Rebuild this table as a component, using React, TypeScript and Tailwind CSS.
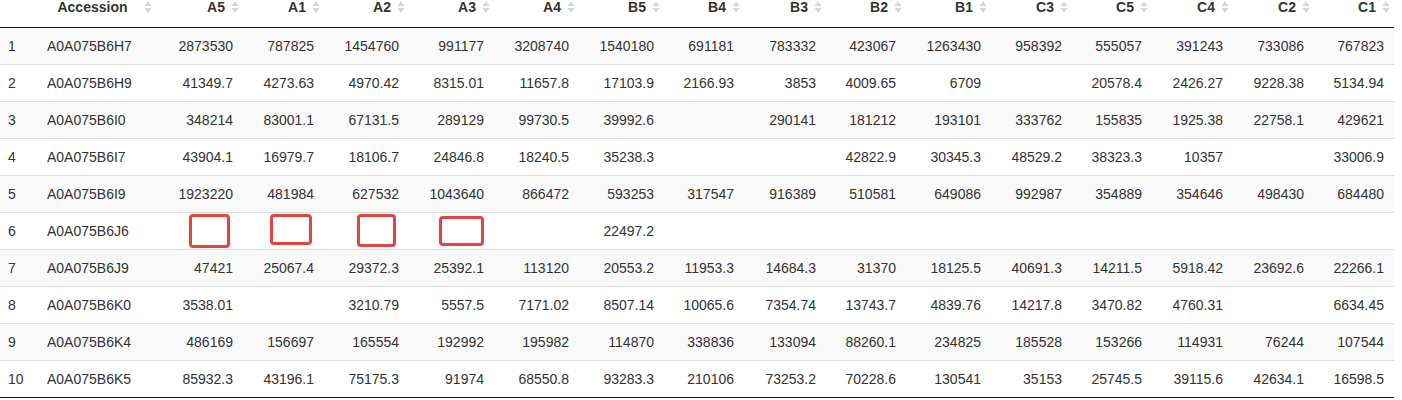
import React from "react";

const cols = ["A5", "A1", "A2", "A3", "A4", "B5", "B4", "B3", "B2", "B1", "C3", "C5", "C4", "C2", "C1"];
const widths = [37, 119, 87, 81, 85, 85, 85, 85, 80, 82, 80, 85, 81, 80, 81, 81, 80];

const rows: [string, string[]][] = [
  ["A0A075B6H7", ["2873530", "787825", "1454760", "991177", "3208740", "1540180", "691181", "783332", "423067", "1263430", "958392", "555057", "391243", "733086", "767823"]],
  ["A0A075B6H9", ["41349.7", "4273.63", "4970.42", "8315.01", "11657.8", "17103.9", "2166.93", "3853", "4009.65", "6709", "", "20578.4", "2426.27", "9228.38", "5134.94"]],
  ["A0A075B6I0", ["348214", "83001.1", "67131.5", "289129", "99730.5", "39992.6", "", "290141", "181212", "193101", "333762", "155835", "1925.38", "22758.1", "429621"]],
  ["A0A075B6I7", ["43904.1", "16979.7", "18106.7", "24846.8", "18240.5", "35238.3", "", "", "42822.9", "30345.3", "48529.2", "38323.3", "10357", "", "33006.9"]],
  ["A0A075B6I9", ["1923220", "481984", "627532", "1043640", "866472", "593253", "317547", "916389", "510581", "649086", "992987", "354889", "354646", "498430", "684480"]],
  ["A0A075B6J6", ["", "", "", "", "", "22497.2", "", "", "", "", "", "", "", "", ""]],
  ["A0A075B6J9", ["47421", "25067.4", "29372.3", "25392.1", "113120", "20553.2", "11953.3", "14684.3", "31370", "18125.5", "40691.3", "14211.5", "5918.42", "23692.6", "22266.1"]],
  ["A0A075B6K0", ["3538.01", "", "3210.79", "5557.5", "7171.02", "8507.14", "10065.6", "7354.74", "13743.7", "4839.76", "14217.8", "3470.82", "4760.31", "", "6634.45"]],
  ["A0A075B6K4", ["486169", "156697", "165554", "192992", "195982", "114870", "338836", "133094", "88260.1", "234825", "185528", "153266", "114931", "76244", "107544"]],
  ["A0A075B6K5", ["85932.3", "43196.1", "75175.3", "91974", "68550.8", "93283.3", "210106", "73253.2", "70228.6", "130541", "35153", "25745.5", "39115.6", "42634.1", "16598.5"]],
];

function SortIcon() {
  return (
    <svg width="8" height="14" viewBox="0 0 8 14" className="absolute right-[4px] top-1/2 -translate-y-1/2">
      <polygon points="4,1 7.5,6 0.5,6" fill="#d6d6d6" />
      <polygon points="0.5,8 7.5,8 4,13" fill="#d6d6d6" />
    </svg>
  );
}

const boxes = [
  { l: 189, t: 214, w: 41, h: 34 },
  { l: 270, t: 214, w: 42, h: 31 },
  { l: 357, t: 214, w: 39, h: 33 },
  { l: 439, t: 216, w: 45, h: 30 },
];

export default function App() {
  return (
    <div className="relative w-[1402px] h-[400px] overflow-hidden bg-white text-[#333] text-[14px] leading-[20px]" style={{ fontFamily: '"Liberation Sans", Arial, Helvetica, sans-serif' }}>
      <table className="table-fixed border-collapse w-[1394px] -mt-[13px] border-b border-[#111]">
        <colgroup>
          {widths.map((w, i) => (
            <col key={i} style={{ width: w }} />
          ))}
        </colgroup>
        <thead>
          <tr className="border-b border-[#111]">
            <th className="pt-[10px] pb-[10px] pl-[8px]"></th>
            <th className="relative pt-[10px] pb-[10px] pl-[10px] pr-[18px] font-bold text-center">
              Accession
              <SortIcon />
            </th>
            {cols.map((c) => (
              <th key={c} className="relative pt-[10px] pb-[10px] pl-[10px] pr-[18px] font-bold text-right">
                {c}
                <SortIcon />
              </th>
            ))}
          </tr>
        </thead>
        <tbody>
          {rows.map(([acc, vals], i) => (
            <tr key={acc} className={`${i > 0 ? "border-t border-[#ddd]" : ""} ${i % 2 === 0 ? "bg-[#f9f9f9]" : "bg-white"}`}>
              <td className="py-[8px] pl-[8px] pr-[4px] h-[36px]">{i + 1}</td>
              <td className="py-[8px] px-[10px] whitespace-nowrap">{acc}</td>
              {vals.map((v, j) => (
                <td key={j} className="py-[8px] px-[10px] text-right whitespace-nowrap">
                  {v}
                </td>
              ))}
            </tr>
          ))}
        </tbody>
      </table>
      {boxes.map((b, i) => (
        <div
          key={i}
          className="absolute border-[3px] border-[#e0463f] rounded-[4px]"
          style={{ left: b.l, top: b.t, width: b.w, height: b.h }}
        />
      ))}
    </div>
  );
}
